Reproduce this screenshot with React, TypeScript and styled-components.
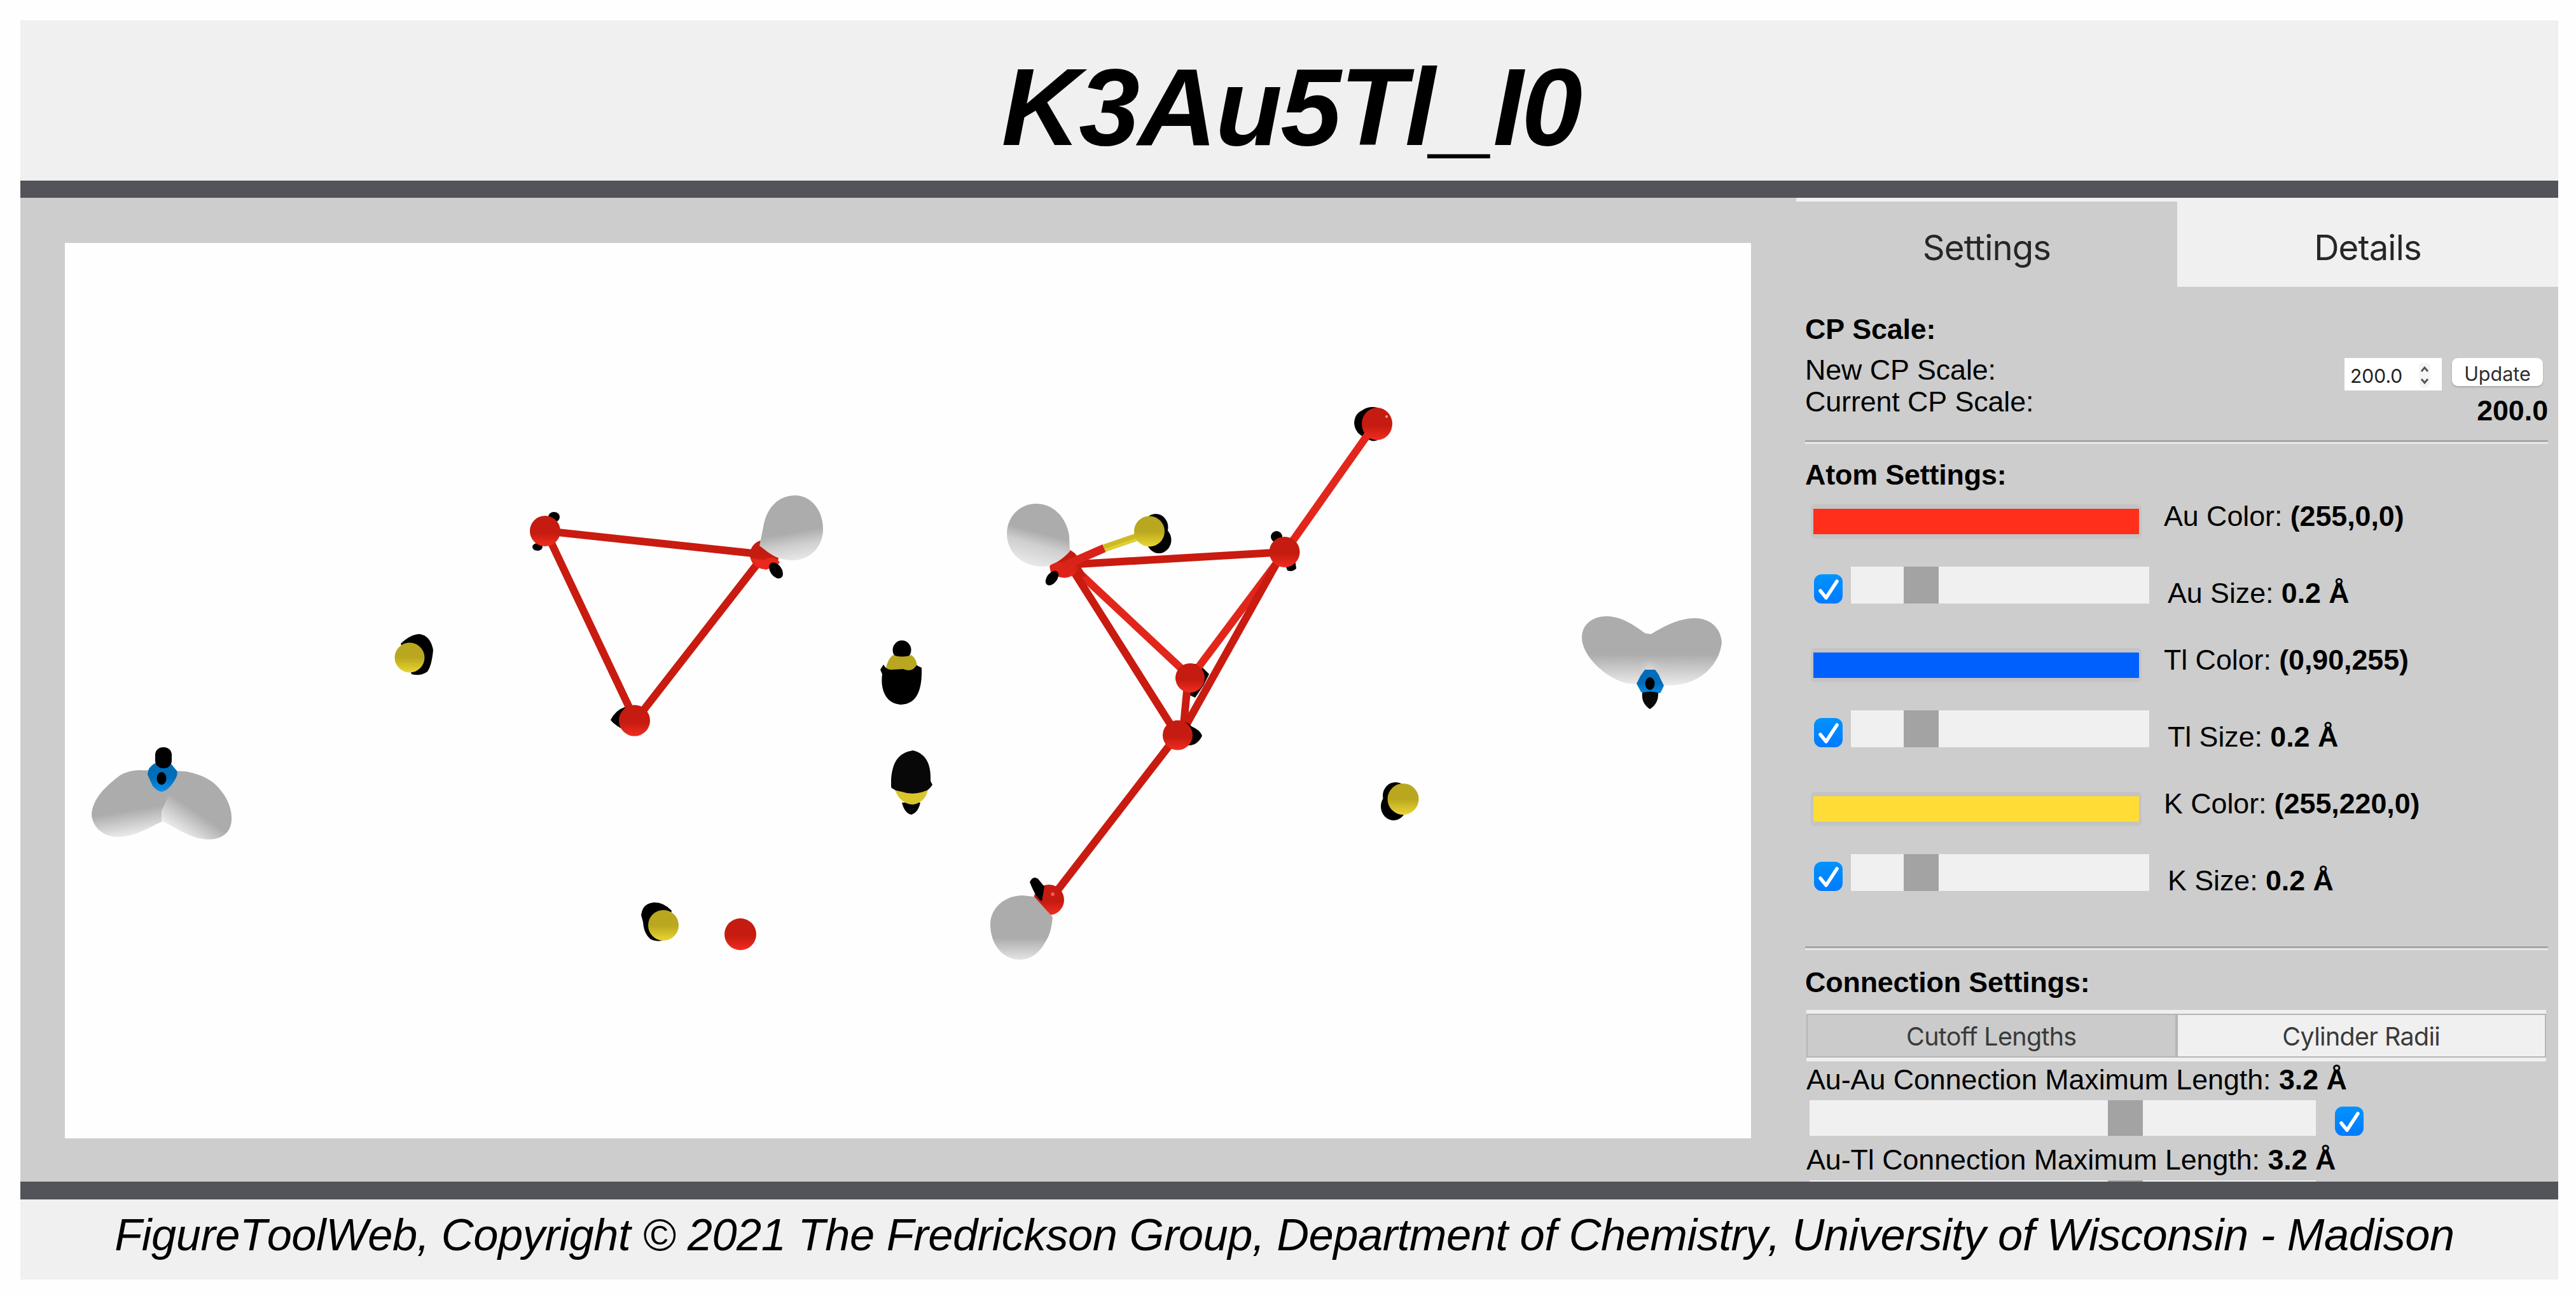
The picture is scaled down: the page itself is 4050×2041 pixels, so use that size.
import React from "react";
import styled, { createGlobalStyle } from "styled-components";

const GlobalStyle = createGlobalStyle`
  * {
    box-sizing: border-box;
  }
  body {
    margin: 0;
    background: #fefefe;
    font-family: "Liberation Sans", Arial, sans-serif;
    font-kerning: none;
    color: black;
  }
`;

const Page = styled.div`
  display: flex;
  flex-direction: column;
  width: 4050px;
  height: 2041px;
  padding: 32px 28px 29px 32px;
  overflow: hidden;
`;
const Header = styled.header`
  height: 279px;
  flex: none;
  padding: 22px 0 0 6px;
  background: #f0f0f0;
  border-bottom: 27px solid #535459;
`;
const Title = styled.h1`
  margin: 0;
  line-height: 228px;
  font-size: 172px;
  font-style: italic;
  letter-spacing: -2.6px;
  text-align: center;
`;
const Main = styled.main`
  display: flex;
  height: 1547px;
  flex: none;
  overflow: hidden;
  background: #cdcdcd;
`;
const Viewer = styled.div`
  width: 2651px;
  height: 1408px;
  flex: none;
  margin: 71px 71px 0 70px;
  background: #fefefe;
  svg {
    display: block;
  }
`;
const Panel = styled.aside`
  flex: 1;
  border-top: 6px solid #f0f0f0;
`;
const Footer = styled.footer`
  height: 154px;
  flex: none;
  background: #f0f0f0;
  border-top: 28px solid #535459;
  font-size: 70.5px;
  letter-spacing: -0.5px;
  font-style: italic;
  line-height: 111px;
  text-align: center;
  white-space: nowrap;
  padding-right: 15px;
`;

const Tabs = styled.div`
  display: flex;
  height: 134px;
`;
const Tab = styled.button<{ $active?: boolean }>`
  flex: 1;
  border: none;
  padding: 10px 0 0;
  background: ${(props) => (props.$active ? "#cdcdcd" : "#f0f0f0")};
  color: #262626;
  font-family: Inter, sans-serif;
  font-size: 54.5px;
  letter-spacing: -0.9px;
`;
const Content = styled.div`
  padding: 41px 16px 0 14px;
  font-size: 44.8px;
  letter-spacing: -0.05px;
  line-height: 50px;
  white-space: nowrap;
`;
const Heading = styled.div`
  font-weight: bold;
  letter-spacing: -0.15px;
`;
const Rule = styled.hr<{ $top: number; $bottom: number }>`
  height: 6px;
  border: none;
  border-top: 3px solid #a6a6a6;
  background: #e9e9e9;
  margin: ${(props) => props.$top}px 0 ${(props) => props.$bottom}px;
`;

const ScaleRow = styled.div`
  display: flex;
  justify-content: space-between;
  height: 115px;
  margin-top: 14px;
`;
const ScaleLabels = styled.div`
  letter-spacing: -0.1px;
`;
const ScaleValue = styled.div`
  padding-top: 7px;
  text-align: right;
`;
const ScaleForm = styled.div`
  display: flex;
  gap: 16px;
  padding-right: 8px;
  height: 57px;
`;
const NumberBox = styled.div`
  display: flex;
  align-items: center;
  justify-content: space-between;
  width: 153px;
  height: 51px;
  padding: 3px 17px 0 9px;
  background: white;
`;
const NumberInput = styled.input`
  width: 96px;
  padding: 1px 0 0;
  border: none;
  outline: none;
  background: transparent;
  color: #222;
  font-family: Inter, sans-serif;
  font-size: 30px;
`;
const UpdateButton = styled.button`
  width: 143px;
  height: 44px;
  padding: 5px 0 0;
  border: none;
  border-radius: 9px;
  background: white;
  box-shadow: 0 2px 3px rgba(0, 0, 0, 0.18);
  color: #2e2e2e;
  font-family: Inter, sans-serif;
  font-size: 30.5px;
`;

const Atom = styled.div`
  height: 226px;
  padding-top: 15px;
`;
const ColorRow = styled.div`
  display: flex;
  height: 105px;
  padding-left: 9px;
`;
const Swatch = styled.button<{ $color: string }>`
  width: 520px;
  height: 54px;
  margin: 7px 35px 0 0;
  padding: 0;
  border: solid #c4c4c4;
  border-width: 7px 4px;
  border-radius: 6px;
  background: ${(props) => props.$color};
`;
const SizeRow = styled.div`
  display: flex;
  padding-left: 14px;
`;
const SizeLabel = styled.div`
  padding-top: 16px;
`;
const CheckBox = styled.span<{ $top: number }>`
  width: 45px;
  height: 46px;
  margin-top: ${(props) => props.$top}px;
  border-radius: 12px;
  background: linear-gradient(#0093ff, #007aff);
  svg {
    display: block;
  }
`;
const Slider = styled.input<{ $width: number; $height: number }>`
  appearance: none;
  width: ${(props) => props.$width}px;
  height: ${(props) => props.$height}px;
  margin: 0;
  background: #f0f0f0;
  &::-webkit-slider-thumb {
    appearance: none;
    width: 55px;
    height: ${(props) => props.$height}px;
    background: #a3a3a3;
  }
`;
const SizeSlider = styled(Slider)`
  margin: 0 29px 0 13px;
`;

const SubTabs = styled.div`
  display: flex;
  height: 81px;
  margin: 19px 3px 3px 2px;
  border: solid #efefef;
  border-width: 6px 0;
`;
const SubTab = styled.button<{ $active?: boolean }>`
  flex: 1;
  padding: 2px 0 0;
  border: 2px solid #b5b5b5;
  background: ${(props) => (props.$active ? "#cbcbcb" : "#f0f0f0")};
  color: #3a3a3a;
  font-family: Inter, sans-serif;
  font-size: 39.5px;
  letter-spacing: -0.7px;
`;
const Connection = styled.div`
  height: 126px;
  padding-left: 2px;
`;
const LengthRow = styled.div`
  display: flex;
  gap: 30px;
  padding: 8px 0 0 5px;
`;

const Check = ({ top }: { top: number }) => (
  <CheckBox $top={top}>
    <svg width="45" height="46" viewBox="0 0 45 46" fill="none">
      <path
        d="M10 26 L19 37 L36 11"
        stroke="white"
        strokeWidth="5.5"
        strokeLinecap="round"
        strokeLinejoin="round"
      />
    </svg>
  </CheckBox>
);

const atoms = [
  { name: "Au", rgb: "(255,0,0)", color: "#ff2f1c" },
  { name: "Tl", rgb: "(0,90,255)", color: "#0060fd" },
  { name: "K", rgb: "(255,220,0)", color: "#ffdc36" },
];

const dark = "#c91b10";
const lit = "#e2261b";

const bonds = [
  { from: [858, 835], to: [1202, 872], color: dark },
  { from: [858, 835], to: [999, 1133], color: dark },
  { from: [1202, 872], to: [999, 1133], color: dark },
  { from: [1678, 888], to: [2020, 868], color: dark },
  { from: [2020, 868], to: [2162, 667], color: lit },
  { from: [1684, 889], to: [1871, 1064], color: lit },
  { from: [2020, 868], to: [1873, 1064], color: lit },
  { from: [1682, 889], to: [1851, 1156], color: dark },
  { from: [2017, 868], to: [1857, 1154], color: dark },
  { from: [1868, 1066], to: [1860, 1150], color: dark },
  { from: [1851, 1156], to: [1651, 1415], color: dark },
];

function Structure() {
  return (
    <svg width="2651" height="1408" viewBox="102 382 2651 1408">
      <defs>
        <linearGradient id="red" x1="0" y1="0" x2="0" y2="1">
          <stop offset="0.55" stopColor="#c51b10" />
          <stop offset="1" stopColor="#f22c20" />
        </linearGradient>
        <linearGradient id="yellow" x1="0" y1="0" x2="0" y2="1">
          <stop offset="0.5" stopColor="#b9a71f" />
          <stop offset="1" stopColor="#ead632" />
        </linearGradient>
        <linearGradient id="blue" x1="0" y1="0" x2="0" y2="1">
          <stop offset="0.5" stopColor="#006db9" />
          <stop offset="1" stopColor="#0b90ee" />
        </linearGradient>
        <linearGradient id="gray" x1="0" y1="0" x2="0" y2="1">
          <stop offset="0.55" stopColor="#acacac" />
          <stop offset="1" stopColor="#ececec" />
        </linearGradient>
        <linearGradient id="grayTilt" gradientUnits="userSpaceOnUse" x1="1636" y1="838" x2="1621" y2="893">
          <stop offset="0" stopColor="#acacac" />
          <stop offset="0.35" stopColor="#cfcfcf" />
          <stop offset="1" stopColor="#ececec" />
        </linearGradient>
        <linearGradient id="grayTiltRight" gradientUnits="userSpaceOnUse" x1="1240" y1="838" x2="1248" y2="884">
          <stop offset="0" stopColor="#acacac" />
          <stop offset="0.45" stopColor="#cfcfcf" />
          <stop offset="1" stopColor="#eaeaea" />
        </linearGradient>
        <linearGradient id="grayLow" x1="0" y1="0" x2="0" y2="1">
          <stop offset="0.66" stopColor="#acacac" />
          <stop offset="1" stopColor="#e4e4e4" />
        </linearGradient>
        <linearGradient id="wingLeft" gradientUnits="userSpaceOnUse" x1="200" y1="1275" x2="207" y2="1318">
          <stop offset="0" stopColor="#acacac" />
          <stop offset="1" stopColor="#f2f2f2" />
        </linearGradient>
        <linearGradient id="wingRight" gradientUnits="userSpaceOnUse" x1="325" y1="1262" x2="285" y2="1320">
          <stop offset="0.3" stopColor="#acacac" />
          <stop offset="0.95" stopColor="#f2f2f2" />
        </linearGradient>
        <radialGradient id="glow">
          <stop offset="0" stopColor="#e0e0e0" />
          <stop offset="1" stopColor="#cccccc" stopOpacity="0" />
        </radialGradient>
      </defs>

      {/* black lobes behind the atoms */}
      <g fill="black">
        <ellipse cx="871" cy="813" rx="9" ry="8" />
        <ellipse cx="845" cy="860" rx="8" ry="6" />
        <path d="M960 1132 Q967 1117 984 1111 Q995 1107 1004 1111 L998 1146 L976 1145 Q964 1138 960 1132Z" />
        <path d="M2129 665 Q2130 650 2142 645 Q2152 638 2166 641 L2166 692 Q2158 696 2148 689 Q2130 682 2129 665Z" />
        <ellipse cx="2007" cy="844" rx="9" ry="9" />
        <path d="M2022 892 L2036 880 L2038 894 Q2032 900 2024 897Z" />
        <path d="M1860 1046 Q1872 1042 1886 1045 L1901 1060 L1892 1078 L1879 1097 L1868 1092Z" />
        <ellipse cx="1817" cy="829" rx="19.5" ry="21" />
        <ellipse cx="1822" cy="849" rx="19.5" ry="21" />
        <ellipse cx="2194" cy="1251" rx="20" ry="21" />
        <ellipse cx="2191" cy="1268" rx="20" ry="22" />
        <path d="M630 1012 Q646 997 660 997 Q677 1000 681 1022 Q679 1046 672 1056 Q661 1064 647 1060Z" />
        <path d="M1008 1439 Q1010 1420 1029 1419 Q1044 1419 1056 1432 L1044 1478 Q1034 1482 1023 1477 Q1012 1468 1011 1450Z" />
      </g>

      <g strokeWidth="12">
        {bonds.map(({ from, to, color }, i) => (
          <line key={i} x1={from[0]} y1={from[1]} x2={to[0]} y2={to[1]} stroke={color} />
        ))}
      </g>
      <path d="M1682 884 L1695 885 L1708 906 L1698 908Z" fill={dark} />

      <g fill="url(#red)">
        <circle cx="857" cy="835" r="24" />
        <circle cx="997.5" cy="1133" r="24.5" />
        <circle cx="1202" cy="872" r="23" />
        <circle cx="1164" cy="1469" r="25" />
        <ellipse cx="2165" cy="666.5" rx="24" ry="25.5" />
        <circle cx="2019.5" cy="868" r="24" />
        <circle cx="1871" cy="1066" r="23" />
        <circle cx="1674" cy="886" r="22.5" />
        <circle cx="1649" cy="1415" r="24" />
      </g>
      <path d="M1842 1136 Q1866 1132 1873 1142 Q1887 1148 1890 1157 Q1882 1173 1868 1172 L1850 1165Z" fill="black" />
      <circle cx="1851.5" cy="1156" r="23.5" fill="url(#red)" />

      {/* gray lobes */}
      <path
        d="M1194 858 L1200 829 C1205 798 1224 779 1250 779 C1276 779 1294 803 1294 832 C1294 860 1274 881 1245 881 C1230 881 1218 876 1207 868Z"
        fill="url(#grayTiltRight)"
      />
      <path
        d="M1682 867 L1681 842 C1676 813 1656 792 1629 792 C1603 792 1583 813 1583 839 C1583 868 1606 891 1641 891 C1656 889 1670 880 1682 867Z"
        fill="url(#grayTilt)"
      />
      <path
        d="M1655 1442 C1653 1462 1650 1471 1643 1482 C1634 1499 1620 1509 1603 1509 C1577 1509 1557 1485 1557 1454 C1557 1428 1579 1408 1608 1408 L1626 1410Z"
        fill="url(#grayLow)"
      />
      <path
        d="M256 1291 C235 1301 212 1316 186 1316 C160 1316 144 1298 144 1279 C147 1255 165 1237 189 1219 Q203 1211 220 1211 L292 1213 L292 1260Z"
        fill="url(#wingLeft)"
      />
      <path
        d="M254 1291 L254 1275 L268 1245 L268 1212 L292 1213 C312 1217 325 1222 337 1232 C352 1246 365 1265 364 1290 C363 1308 350 1320 328 1320 C300 1320 275 1300 254 1291Z"
        fill="url(#wingRight)"
      />
      <path
        d="M2596 997 C2616 985 2637 973 2664 972 C2691 972 2706 990 2707 1010 C2703 1048 2670 1077 2626 1078 L2560 1075 C2520 1066 2487 1028 2487 1003 C2487 982 2503 969 2527 969 C2555 970 2576 989 2587 996Z"
        fill="url(#gray)"
      />
      <ellipse cx="2594" cy="1056" rx="20" ry="20" fill="url(#glow)" />

      <path d="M1202 881 Q1215 871 1226 884 L1222 889 L1204 896 Q1188 890 1180 878Z" fill="#ea281c" />
      <path d="M1650 890 Q1658 883 1672 884 L1694 885 L1688 900 L1676 908 Q1664 910 1652 900Z" fill="#de241a" />
      <line x1="1672" y1="890" x2="1736" y2="862" stroke="#da2318" strokeWidth="13" />
      <line x1="1736" y1="862" x2="1800" y2="840" stroke="#cdb925" strokeWidth="12" />
      <line x1="1738" y1="865" x2="1790" y2="847" stroke="#e3cf30" strokeWidth="4" />

      <g fill="url(#yellow)">
        <circle cx="1807" cy="835.5" r="24" />
        <circle cx="2206" cy="1256.5" r="24.5" />
        <circle cx="644" cy="1034" r="23.5" />
        <circle cx="1043" cy="1455" r="24" />
      </g>

      <g fill="black">
        <ellipse cx="1220" cy="897" rx="9" ry="14" transform="rotate(-35 1220 897)" />
        <ellipse cx="1654" cy="909" rx="8" ry="13" transform="rotate(38 1654 909)" />
        <path d="M1619 1387 Q1624 1376 1632 1382 L1642 1394 L1638 1417 Q1629 1413 1619 1387Z" />
      </g>

      {/* K atoms seen end on */}
      <ellipse cx="1418" cy="1022" rx="14.5" ry="15" fill="black" />
      <path d="M1393 1050 Q1396 1036 1404 1030 Q1418 1035 1433 1030 Q1442 1037 1442 1050 L1438 1060 L1397 1060Z" fill="#b9a71f" />
      <path d="M1384 1053 L1389 1045 Q1394 1054 1402 1053 L1420 1052 Q1434 1058 1441 1046 L1449 1050 C1450 1085 1442 1107 1416 1108 C1391 1106 1384 1082 1387 1060Z" fill="black" />
      <path d="M1418 1262 L1447 1262 Q1444 1277 1433 1281 Q1422 1279 1418 1262Z" fill="black" />
      <path d="M1407 1242 L1459 1242 Q1454 1262 1436 1265 Q1416 1265 1407 1242Z" fill="#d9c52c" />
      <path d="M1401 1226 C1403 1200 1411 1184 1435 1180 C1458 1185 1464 1205 1463 1228 L1466 1234 Q1460 1243 1454 1244 Q1435 1251 1418 1245 Q1405 1243 1401 1238Z" fill="#080808" />

      {/* Tl atoms */}
      <path d="M244 1200 Q232 1206 232 1218 L240 1236 Q248 1245 255 1245 Q264 1243 272 1231 Q281 1218 278 1212 L268 1200Z" fill="url(#blue)" />
      <rect x="244" y="1175" width="26" height="33" rx="12" fill="black" />
      <ellipse cx="254" cy="1224" rx="7.5" ry="10" fill="black" />
      <path d="M2586 1053 L2602 1053 Q2608 1060 2610 1066 L2616 1078 L2611 1089 L2594 1095 L2580 1088 L2573 1075 L2579 1063Z" fill="url(#blue)" />
      <path d="M2582 1089 Q2594 1086 2607 1089 Q2608 1106 2594 1115 Q2580 1106 2582 1089Z" fill="#090909" />
      <ellipse cx="2594" cy="1075" rx="7.5" ry="10" fill="black" />

      <circle cx="2180" cy="655" r="2" fill="#f39a94" />
      <circle cx="1655" cy="1406" r="3" fill="#f0594f" />
    </svg>
  );
}

function App() {
  return (
    <Page>
      <GlobalStyle />
      <Header>
        <Title>K3Au5Tl_I0</Title>
      </Header>
      <Main>
        <Viewer>
          <Structure />
        </Viewer>
        <Panel>
          <Tabs>
            <Tab $active>Settings</Tab>
            <Tab>Details</Tab>
          </Tabs>
          <Content>
            <Heading>CP Scale:</Heading>
            <ScaleRow>
              <ScaleLabels>
                <div>New CP Scale:</div>
                <div>Current CP Scale:</div>
              </ScaleLabels>
              <ScaleValue>
                <ScaleForm>
                  <NumberBox>
                    <NumberInput defaultValue="200.0" />
                    <svg width="20" height="40" viewBox="0 0 20 40" fill="none">
                      <rect x="1" y="0" width="18" height="40" rx="8" fill="#f5f5f5" />
                      <path
                        d="M5 14 L10 8 L15 14 M5 26 L10 32 L15 26"
                        stroke="#555"
                        strokeWidth="3"
                      />
                    </svg>
                  </NumberBox>
                  <UpdateButton>Update</UpdateButton>
                </ScaleForm>
                <b>200.0</b>
              </ScaleValue>
            </ScaleRow>
            <Rule $top={21} $bottom={23} />
            <Heading>Atom Settings:</Heading>
            {atoms.map((atom) => (
              <Atom key={atom.name}>
                <ColorRow>
                  <Swatch $color={atom.color} />
                  <div>
                    {atom.name} Color: <b>{atom.rgb}</b>
                  </div>
                </ColorRow>
                <SizeRow>
                  <Check top={12} />
                  <SizeSlider
                    type="range"
                    min={0}
                    max={1}
                    step={0.1}
                    defaultValue={0.2}
                    $width={469}
                    $height={58}
                  />
                  <SizeLabel>
                    {atom.name} Size: <b>0.2 Å</b>
                  </SizeLabel>
                </SizeRow>
              </Atom>
            ))}
            <Rule $top={39} $bottom={25} />
            <Heading>Connection Settings:</Heading>
            <SubTabs>
              <SubTab $active>Cutoff Lengths</SubTab>
              <SubTab>Cylinder Radii</SubTab>
            </SubTabs>
            {["Au-Au", "Au-Tl"].map((pair) => (
              <Connection key={pair}>
                <div>
                  {pair} Connection Maximum Length: <b>3.2 Å</b>
                </div>
                <LengthRow>
                  <Slider
                    type="range"
                    min={0.1}
                    max={5}
                    step={0.1}
                    defaultValue={3.2}
                    $width={796}
                    $height={56}
                  />
                  <Check top={10} />
                </LengthRow>
              </Connection>
            ))}
          </Content>
        </Panel>
      </Main>
      <Footer>
        FigureToolWeb, Copyright © 2021 The Fredrickson Group, Department of
        Chemistry, University of Wisconsin - Madison
      </Footer>
    </Page>
  );
}

export default App;
